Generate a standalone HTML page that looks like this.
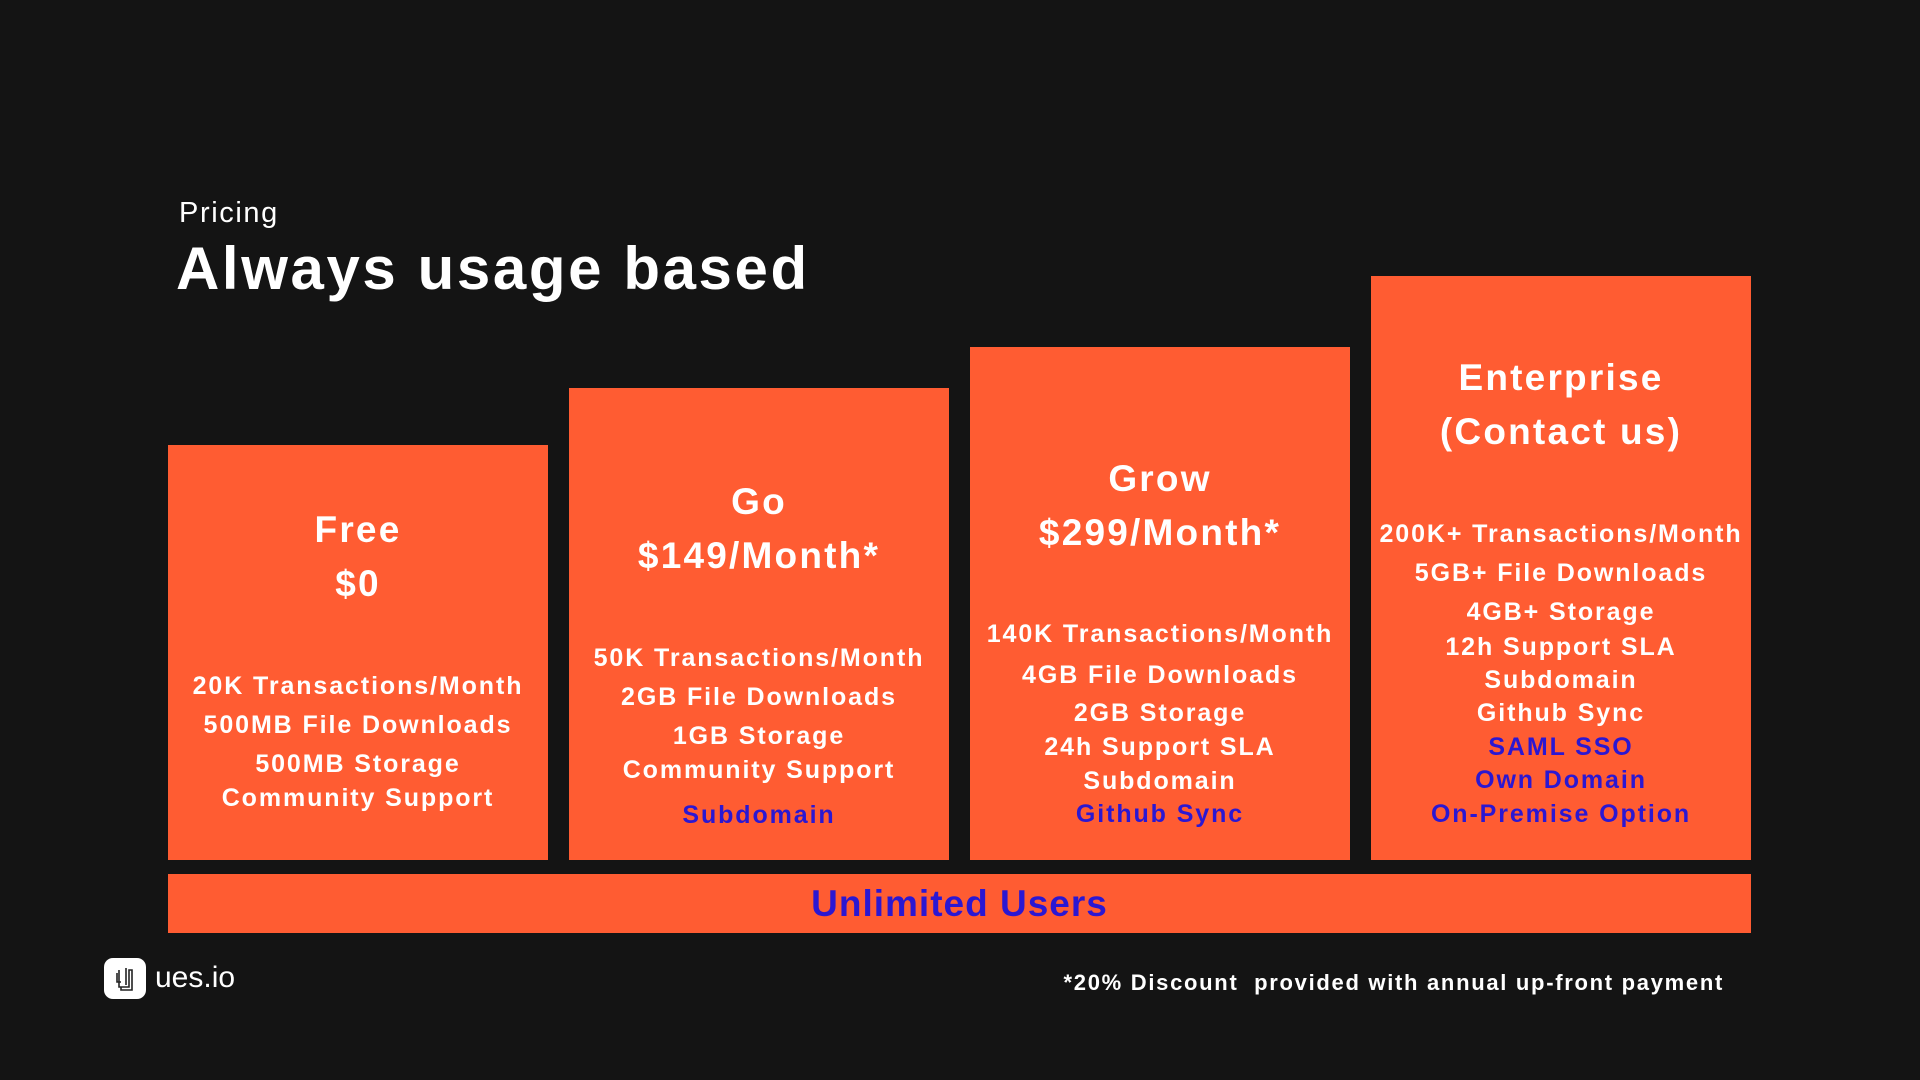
<!DOCTYPE html>
<html><head><meta charset="utf-8"><style>
body{margin:0;width:1920px;height:1080px;background:#141414;position:relative;overflow:hidden;font-family:"Liberation Sans",sans-serif;color:#fff}
.a{position:absolute;white-space:nowrap}
.card{position:absolute;background:#ff5c32}
.l{position:absolute;left:-20px;right:-20px;text-align:center;height:40px;line-height:40px;font-size:25px;font-weight:bold;letter-spacing:1.9px}
.t{font-size:37px;height:50px;line-height:50px;letter-spacing:2.2px}
.b{color:#2b17d2}
</style></head><body>
<div class="a" style="left:179px;top:196px;font-size:29px;line-height:34px;letter-spacing:1.6px">Pricing</div>
<div class="a" style="left:176px;top:234px;font-size:60px;line-height:70px;font-weight:bold;letter-spacing:2.6px">Always usage based</div>

<div class="card" style="left:168px;top:445px;width:380px;height:415px">
<div class="l t" style="top:60px">Free</div>
<div class="l t" style="top:114px">$0</div>
<div class="l" style="top:221px">20K Transactions/Month</div>
<div class="l" style="top:260px">500MB File Downloads</div>
<div class="l" style="top:299px">500MB Storage</div>
<div class="l" style="top:333px">Community Support</div>
</div>

<div class="card" style="left:569px;top:388px;width:380px;height:472px">
<div class="l t" style="top:89px">Go</div>
<div class="l t" style="top:143px">$149/Month*</div>
<div class="l" style="top:250px">50K Transactions/Month</div>
<div class="l" style="top:289px">2GB File Downloads</div>
<div class="l" style="top:328px">1GB Storage</div>
<div class="l" style="top:362px">Community Support</div>
<div class="l b" style="top:407px">Subdomain</div>
</div>

<div class="card" style="left:970px;top:347px;width:380px;height:513px">
<div class="l t" style="top:107px">Grow</div>
<div class="l t" style="top:161px">$299/Month*</div>
<div class="l" style="top:267px">140K Transactions/Month</div>
<div class="l" style="top:308px">4GB File Downloads</div>
<div class="l" style="top:346px">2GB Storage</div>
<div class="l" style="top:380px">24h Support SLA</div>
<div class="l" style="top:414px">Subdomain</div>
<div class="l b" style="top:447px">Github Sync</div>
</div>

<div class="card" style="left:1371px;top:276px;width:380px;height:584px">
<div class="l t" style="top:77px">Enterprise</div>
<div class="l t" style="top:131px">(Contact us)</div>
<div class="l" style="top:238px">200K+ Transactions/Month</div>
<div class="l" style="top:277px">5GB+ File Downloads</div>
<div class="l" style="top:316px">4GB+ Storage</div>
<div class="l" style="top:351px">12h Support SLA</div>
<div class="l" style="top:384px">Subdomain</div>
<div class="l" style="top:417px">Github Sync</div>
<div class="l b" style="top:451px">SAML SSO</div>
<div class="l b" style="top:484px">Own Domain</div>
<div class="l b" style="top:518px">On-Premise Option</div>
</div>

<div class="card" style="left:168px;top:874px;width:1583px;height:59px">
<div class="l b" style="top:5px;height:50px;line-height:50px;font-size:37px;letter-spacing:1px">Unlimited Users</div>
</div>

<div class="a" style="left:104px;top:958px;width:42px;height:41px;background:#fff;border-radius:9px">
<svg width="42" height="41" viewBox="0 0 42 41"><path d="M15 12v17h10v-17h3v20h-11v-3M13 15v9h4M22 10v17" fill="none" stroke="#222" stroke-width="1.6"/></svg>
</div>
<div class="a" style="left:155px;top:958px;font-size:30px;line-height:40px">ues.io</div>
<div class="a" style="right:196px;top:968px;font-size:22px;line-height:30px;font-weight:bold;letter-spacing:1.7px">*20% Discount &nbsp;provided with annual up-front payment</div>
</body></html>
